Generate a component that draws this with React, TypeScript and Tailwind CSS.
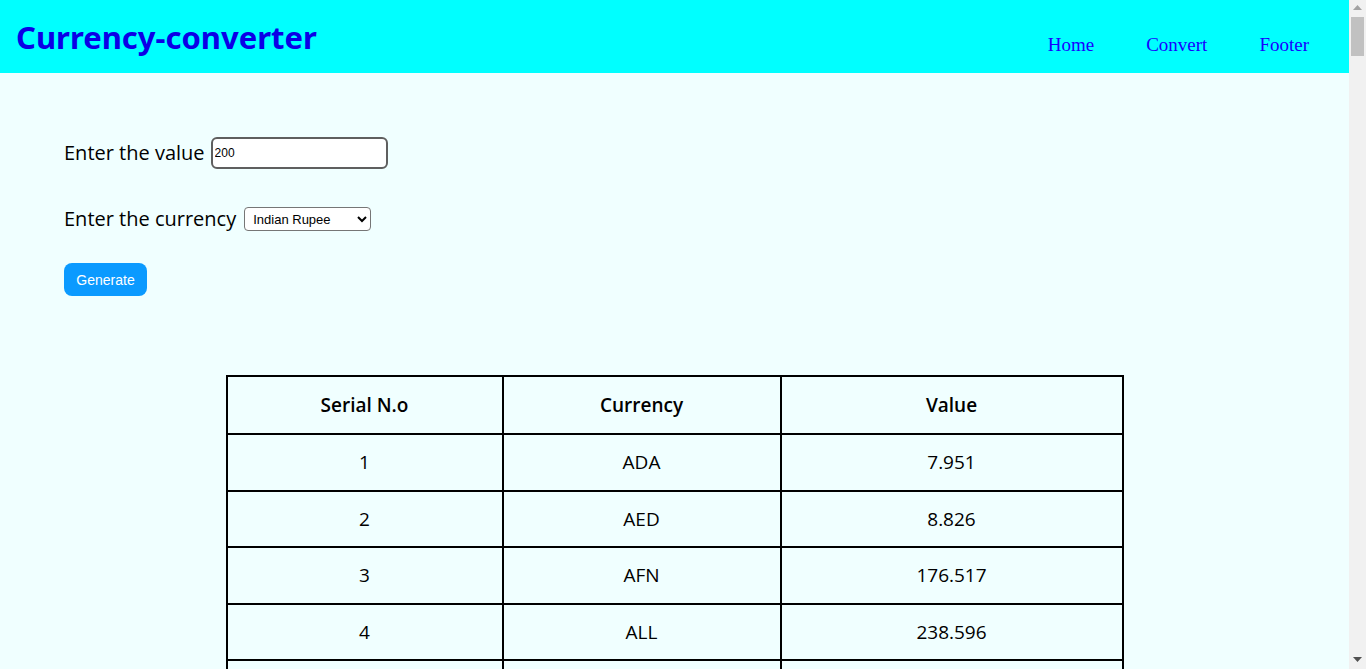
import React from 'react';

const rates: [string, string][] = [
  ['ADA', '7.951'],
  ['AED', '8.826'],
  ['AFN', '176.517'],
  ['ALL', '238.596'],
  ['AMD', '938.412'],
];

const Scrollbar: React.FC = () => (
  <div className="w-[17px] shrink-0 h-screen bg-[#f1f1f1] flex flex-col items-center">
    <svg width="9" height="6" viewBox="0 0 9 6" className="mt-[5px]">
      <polygon points="4.5,0 9,5 0,5" fill="#a3a3a3" />
    </svg>
    <div className="mt-[6px] w-[13px] h-[39px] bg-[#c1c1c1]" />
    <div className="flex-1" />
    <svg width="9" height="6" viewBox="0 0 9 6" className="mb-[6px]">
      <polygon points="0,0 9,0 4.5,5" fill="#505050" />
    </svg>
  </div>
);

const App: React.FC = () => {
  return (
    <div className="flex h-screen overflow-hidden bg-[#f0ffff] font-['Open_Sans',sans-serif] text-black">
      <div className="flex-1 min-w-0">
        <header className="h-[73px] bg-[#00ffff] flex items-center justify-between pl-4 pr-10">
          <h1 className="text-[31px] font-bold text-[#0c00e6] font-['Noto_Sans',sans-serif] pt-[2px]">Currency-converter</h1>
          <nav className="flex gap-[52px] pt-[18px] font-['Liberation_Serif',serif] text-[19px] text-[#1a00ff]">
            <a href="#">Home</a>
            <a href="#">Convert</a>
            <a href="#">Footer</a>
          </nav>
        </header>

        <section className="pl-16 pt-[64px]">
          <div className="flex items-center h-8 text-[20px]">
            <label className="mr-[6px]">Enter the value</label>
            <input
              defaultValue="200"
              className="w-[177px] h-8 border-2 border-[#5f5f5f] rounded-md bg-white px-[2px] text-[12px] font-['Liberation_Sans',sans-serif] outline-none"
            />
          </div>
          <div className="flex items-center h-6 mt-[38px] text-[20px]">
            <label className="mr-2">Enter the currency</label>
            <select className="w-[127px] h-6 border border-[#767676] rounded bg-white pl-1 text-[13px] font-['Liberation_Sans',sans-serif]">
              <option>Indian Rupee</option>
              <option>US Dollar</option>
              <option>Euro</option>
            </select>
          </div>
          <button className="mt-8 w-[83px] h-[33px] rounded-lg bg-[#0b9aff] text-white text-sm font-['Liberation_Sans',sans-serif]">
            Generate
          </button>
        </section>

        <div className="flex justify-center pt-[79px]">
          <table className="w-[898px] border-collapse text-[19px]">
            <thead>
              <tr className="h-[58px]">
                <th className="w-[276px] border-2 border-black font-semibold">Serial N.o</th>
                <th className="w-[278px] border-2 border-black font-semibold">Currency</th>
                <th className="border-2 border-black font-semibold">Value</th>
              </tr>
            </thead>
            <tbody>
              {rates.map(([code, value], i) => (
                <tr key={code} className="h-[56.5px]">
                  <td className="border-2 border-black text-center">{i + 1}</td>
                  <td className="border-2 border-black text-center">{code}</td>
                  <td className="border-2 border-black text-center">{value}</td>
                </tr>
              ))}
            </tbody>
          </table>
        </div>
      </div>
      <Scrollbar />
    </div>
  );
};

export default App;
